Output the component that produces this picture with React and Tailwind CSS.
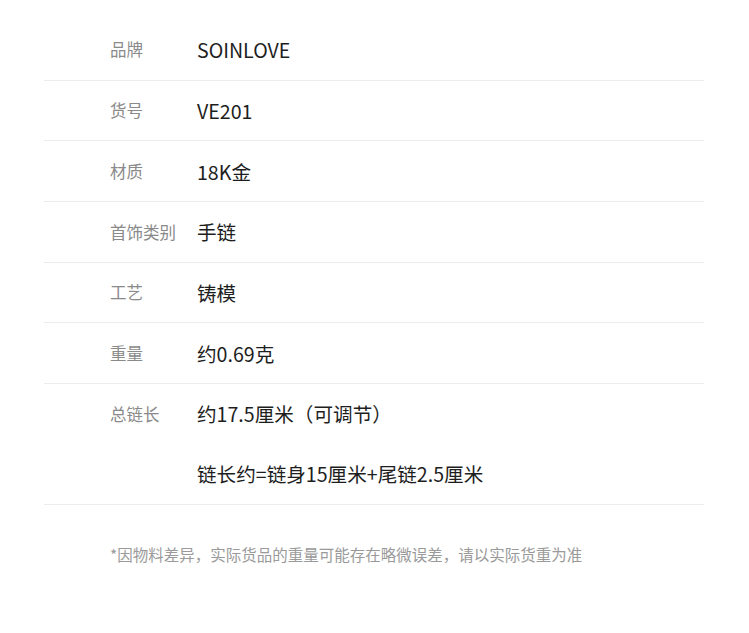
import React from "react";

const rows = [
  { label: "品牌", values: ["SOINLOVE"] },
  { label: "货号", values: ["VE201"] },
  { label: "材质", values: ["18K金"] },
  { label: "首饰类别", values: ["手链"] },
  { label: "工艺", values: ["铸模"] },
  { label: "重量", values: ["约0.69克"] },
  { label: "总链长", values: ["约17.5厘米（可调节）", "链长约=链身15厘米+尾链2.5厘米"] },
];

const App = () => {
  return (
    <div
      className="w-[749px] h-[633px] bg-white pt-[20px]"
      style={{ fontFamily: '"Noto Sans CJK SC", "Noto Sans", sans-serif' }}
    >
      <div className="mx-[44px] w-[660px]">
        {rows.map((row) => (
          <div key={row.label} className="flex border-b border-[#ececec]">
            <div className="w-[153px] pl-[66px] h-[59.7px] flex items-center text-[16.5px] text-[#8a8a8a] shrink-0">
              {row.label}
            </div>
            <div className="flex flex-col">
              {row.values.map((v, i) => (
                <div
                  key={v}
                  className={`${i === 0 ? "h-[59.7px]" : "h-[60.3px]"} flex items-center text-[19.6px] text-[#1e1e1e]`}
                >
                  {v}
                </div>
              ))}
            </div>
          </div>
        ))}
      </div>
      <p className="mt-[38px] pl-[110px] text-[15.5px] text-[#9a9a9a]">
        *因物料差异，实际货品的重量可能存在略微误差，请以实际货重为准
      </p>
    </div>
  );
};

export default App;
